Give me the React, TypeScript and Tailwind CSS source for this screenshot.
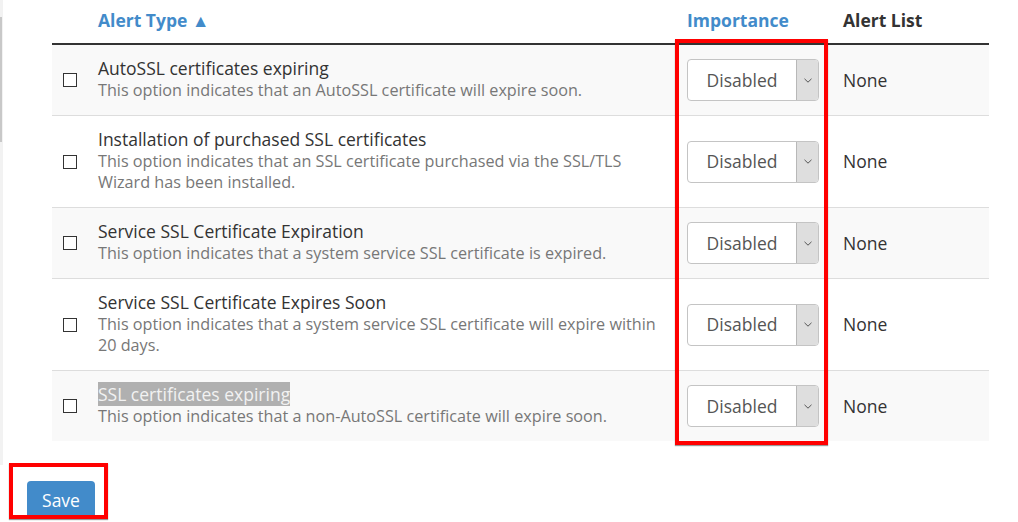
import React from "react";

const rows = [
  {
    title: "AutoSSL certificates expiring",
    desc: ["This option indicates that an AutoSSL certificate will expire soon."],
  },
  {
    title: "Installation of purchased SSL certificates",
    desc: ["This option indicates that an SSL certificate purchased via the SSL/TLS", "Wizard has been installed."],
  },
  {
    title: "Service SSL Certificate Expiration",
    desc: ["This option indicates that a system service SSL certificate is expired."],
  },
  {
    title: "Service SSL Certificate Expires Soon",
    desc: ["This option indicates that a system service SSL certificate will expire within", "20 days."],
  },
  {
    title: "SSL certificates expiring",
    desc: ["This option indicates that a non-AutoSSL certificate will expire soon."],
    selected: true,
  },
];

function Select() {
  return (
    <div className="flex h-[42px] w-[132px] overflow-hidden rounded-[4px] border border-[#c4c4c4] bg-white">
      <div className="flex flex-1 items-center justify-center text-[17.5px] text-[#555]">Disabled</div>
      <div className="flex w-[22px] items-center justify-center border-l border-[#b8b8b8] bg-[#dedede]">
        <svg width="8" height="5" viewBox="0 0 8 5">
          <polyline points="0.5,0.8 4,4.2 7.5,0.8" fill="none" stroke="#555" strokeWidth="1" />
        </svg>
      </div>
    </div>
  );
}

export default function App() {
  return (
    <div
      className="relative flex h-[522px] w-[1018px] overflow-hidden bg-white"
      style={{ fontFamily: '"Open Sans", "Noto Sans", sans-serif' }}
    >
      <div className="relative h-[465px] w-[3px] shrink-0 bg-[#f2f2f2]">
        <div className="absolute left-0 top-[17px] h-[125px] w-[1.5px] bg-[#c8c8c8]" />
      </div>
      <div className="flex flex-col pl-[49px]">
        <div className="relative w-[937px]">
          <div className="grid h-[45px] grid-cols-[46px_589px_156px_1fr] items-center border-b-2 border-[#333] pb-[2px] text-[17.5px] font-bold">
            <div />
            <div className="text-[#428bca]">Alert Type ▲</div>
            <div className="text-[#428bca]">Importance</div>
            <div className="text-[#333]">Alert List</div>
          </div>
          {rows.map((r, i) => (
            <div
              key={i}
              className={`grid grid-cols-[46px_589px_156px_1fr] items-center py-[10.5px] ${
                i % 2 === 0 ? "bg-[#f9f9f9]" : "bg-white"
              } ${i > 0 ? "border-t border-[#dddddd]" : ""}`}
            >
              <div className="flex justify-start pl-[11px]">
                <div className="h-[14px] w-[14px] border border-[#333] bg-white" />
              </div>
              <div className="flex flex-col pb-[4px]">
                <div className="text-[17.5px] leading-[24px] text-[#333]">
                  {r.selected ? (
                    <span className="bg-[#b0b0b0] text-[#f2f2f2]">{r.title}</span>
                  ) : (
                    r.title
                  )}
                </div>
                {r.desc.map((d, j) => (
                  <div key={j} className="whitespace-nowrap text-[16.2px] leading-[21px] text-[#777]">
                    {d}
                  </div>
                ))}
              </div>
              <div>
                <Select />
              </div>
              <div className="text-[17.5px] text-[#333]">None</div>
            </div>
          ))}
          <div className="pointer-events-none absolute left-[623px] top-[39px] h-[406px] w-[153px] border-4 border-[#ff0000] shadow-[0_1px_1px_rgba(0,0,0,0.4)]" />
        </div>
      </div>
      <div className="absolute left-[27px] top-[481px] flex h-[38px] w-[68px] items-start justify-center rounded-[4px] bg-[#428bca] pt-[6px] text-[17.5px] text-white">
        Save
      </div>
      <div className="pointer-events-none absolute left-[9px] top-[463px] h-[56px] w-[99px] border-4 border-[#ff0000] shadow-[0_1px_1px_rgba(0,0,0,0.4)]" />
    </div>
  );
}
